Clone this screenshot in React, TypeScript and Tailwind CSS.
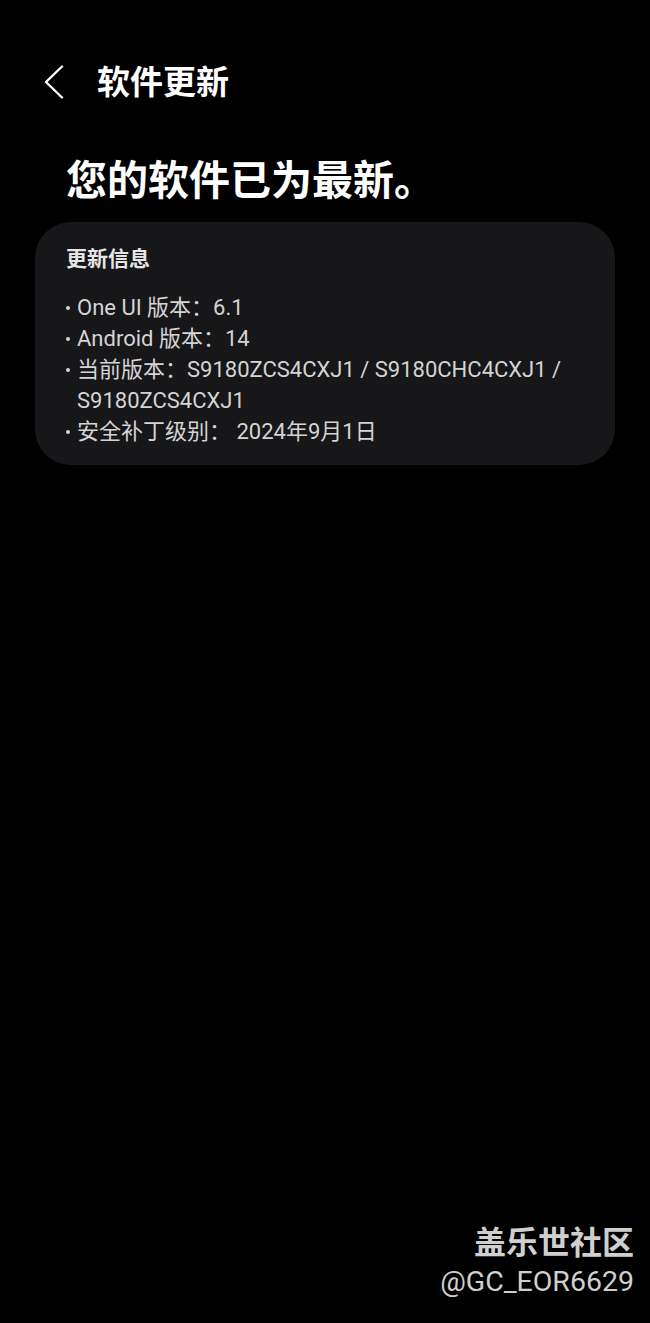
const font = { fontFamily: '"Roboto", "Noto Sans CJK SC", sans-serif' };

const items = [
  "One UI 版本：6.1",
  "Android 版本：14",
  "当前版本：S9180ZCS4CXJ1 / S9180CHC4CXJ1 / S9180ZCS4CXJ1",
  "安全补丁级别： 2024年9月1日",
];

export default function App() {
  return (
    <div className="w-[650px] h-[1323px] bg-black text-white flex flex-col" style={font}>
      {/* Header */}
      <div className="flex items-center h-[50px] mt-[57px] pl-[44px]">
        <svg width="20" height="34" viewBox="0 0 20 34" fill="none" className="text-white">
          <polyline points="18,1.5 2,17 18,32.5" stroke="currentColor" strokeWidth="2.4" strokeLinecap="round" strokeLinejoin="round" />
        </svg>
        <span className="ml-[33px] text-[33px] font-bold leading-none">软件更新</span>
      </div>

      <h1 className="mt-[50px] ml-[66px] text-[41px] font-bold leading-[48px]">您的软件已为最新。</h1>

      {/* Info card */}
      <div className="mt-[17px] mx-[35px] rounded-[36px] bg-[#17171a] pl-[31px] pr-[30px] pt-[22px] pb-[18px]">
        <div className="text-[21px] font-bold text-[#e6e6e6] leading-[30px]">更新信息</div>
        <ul className="mt-[18px] flex flex-col text-[22px] text-[#d4d4d4] leading-[31px]">
          {items.map((t) => (
            <li key={t} className="flex">
              <span className="w-[11px] shrink-0 flex items-start pt-[14px]">
                <span className="w-[4px] h-[4px] rounded-full bg-[#d4d4d4]" />
              </span>
              <span className="pr-[20px]">{t}</span>
            </li>
          ))}
        </ul>
      </div>

      <div className="flex-1" />

      {/* Watermark */}
      <div className="flex flex-col items-end pr-[16px] pb-[22px] text-[#cfcfcf]">
        <span className="text-[32px] font-bold leading-[40px]">盖乐世社区</span>
        <span className="text-[28.5px] leading-[38px]">@GC_EOR6629</span>
      </div>
    </div>
  );
}
